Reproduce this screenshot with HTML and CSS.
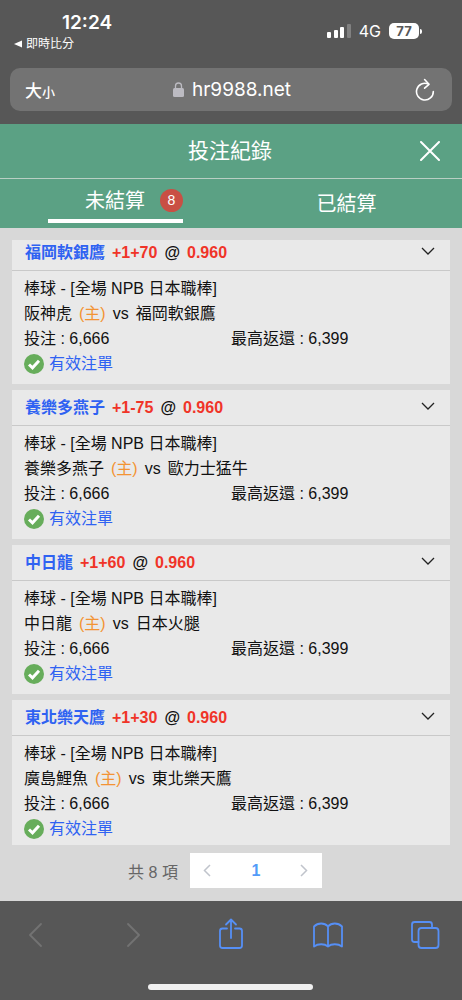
FILE: index.html
```
<!DOCTYPE html>
<html lang="zh-Hant">
<head>
  <meta charset="UTF-8">
  <meta name="viewport" content="width=device-width, initial-scale=1">
  <title>投注紀錄</title>
  <link rel="stylesheet" href="styles.css">
</head>
<body>
  <div class="browser-top">
    <div class="status-bar">
      <div class="status-left">
        <div class="clock">12:24</div>
        <a class="back-app" href="#"><svg width="8" height="8" viewBox="0 0 8 8"><path d="M0 4L8 0.5V7.5Z" fill="#fff"/></svg>即時比分</a>
      </div>
      <div class="status-right">
        <svg width="24" height="16" viewBox="0 0 24 16" fill="#fff">
          <rect x="0" y="9" width="4" height="6" rx="1"/>
          <rect x="7" y="7" width="4" height="8" rx="1"/>
          <rect x="13" y="4" width="4" height="11" rx="1"/>
          <rect x="20" y="1" width="4" height="14" rx="1" opacity="0.25"/>
        </svg>
        <span class="network">4G</span>
        <span class="battery">77</span>
      </div>
    </div>
    <div class="address-bar">
      <button class="text-size" type="button">大<small>小</small></button>
      <div class="url">
        <svg width="11" height="15" viewBox="0 0 11 15"><rect x="0" y="6" width="11" height="9" rx="1.5" fill="#bcbbc2"/><path d="M2.5 7V4a3 3 0 0 1 6 0V7" fill="none" stroke="#bcbbc2" stroke-width="1.3"/></svg>
        <span>hr9988.net</span>
      </div>
      <button class="reload" type="button" aria-label="重新載入">
        <svg width="20" height="24" viewBox="0 0 20 24" fill="none" stroke="#fff" stroke-width="1.6" stroke-linecap="round" stroke-linejoin="round"><path d="M18.3 13.6A8.4 8.4 0 1 1 13.4 6"/><path d="M9.6 1.5L14 6.3L9.6 10.2"/></svg>
      </button>
    </div>
  </div>

  <header class="page-header">
    <h1>投注紀錄</h1>
    <button class="close" type="button" aria-label="關閉">
      <svg width="20" height="20" viewBox="0 0 20 20" stroke="#fff" stroke-width="2" stroke-linecap="round"><path d="M1 1L19 19M19 1L1 19"/></svg>
    </button>
  </header>

  <nav class="tabs">
    <div class="tab">
      <button class="tab-button active" type="button">未結算<span class="badge">8</span></button>
    </div>
    <div class="tab">
      <button class="tab-button" type="button">已結算</button>
    </div>
  </nav>

  <main class="content">
    <div class="bet-list">
      <article class="bet">
        <div class="bet-header">
          <h2><span class="team">福岡軟銀鷹</span> <span class="odds">+1+70</span> <span>@</span> <span class="odds">0.960</span></h2>
          <button class="toggle" type="button" aria-label="收合"><svg width="14" height="8" viewBox="0 0 14 8"><path d="M1 1L7 7L13 1"/></svg></button>
        </div>
        <div class="bet-body">
          <p>棒球 - [全場 NPB 日本職棒]</p>
          <p class="match"><span>阪神虎</span> <span class="home">(主)</span> <span>vs</span> <span>福岡軟銀鷹</span></p>
          <p class="amounts"><span>投注 : 6,666</span><span>最高返還 : 6,399</span></p>
          <p class="valid"><svg width="20" height="20" viewBox="0 0 20 20"><circle cx="10" cy="10" r="10"/><path d="M5 10.5L8.5 13.8L15 6.8"/></svg>有效注單</p>
        </div>
      </article>
      <article class="bet">
        <div class="bet-header">
          <h2><span class="team">養樂多燕子</span> <span class="odds">+1-75</span> <span>@</span> <span class="odds">0.960</span></h2>
          <button class="toggle" type="button" aria-label="收合"><svg width="14" height="8" viewBox="0 0 14 8"><path d="M1 1L7 7L13 1"/></svg></button>
        </div>
        <div class="bet-body">
          <p>棒球 - [全場 NPB 日本職棒]</p>
          <p class="match"><span>養樂多燕子</span> <span class="home">(主)</span> <span>vs</span> <span>歐力士猛牛</span></p>
          <p class="amounts"><span>投注 : 6,666</span><span>最高返還 : 6,399</span></p>
          <p class="valid"><svg width="20" height="20" viewBox="0 0 20 20"><circle cx="10" cy="10" r="10"/><path d="M5 10.5L8.5 13.8L15 6.8"/></svg>有效注單</p>
        </div>
      </article>
      <article class="bet">
        <div class="bet-header">
          <h2><span class="team">中日龍</span> <span class="odds">+1+60</span> <span>@</span> <span class="odds">0.960</span></h2>
          <button class="toggle" type="button" aria-label="收合"><svg width="14" height="8" viewBox="0 0 14 8"><path d="M1 1L7 7L13 1"/></svg></button>
        </div>
        <div class="bet-body">
          <p>棒球 - [全場 NPB 日本職棒]</p>
          <p class="match"><span>中日龍</span> <span class="home">(主)</span> <span>vs</span> <span>日本火腿</span></p>
          <p class="amounts"><span>投注 : 6,666</span><span>最高返還 : 6,399</span></p>
          <p class="valid"><svg width="20" height="20" viewBox="0 0 20 20"><circle cx="10" cy="10" r="10"/><path d="M5 10.5L8.5 13.8L15 6.8"/></svg>有效注單</p>
        </div>
      </article>
      <article class="bet">
        <div class="bet-header">
          <h2><span class="team">東北樂天鷹</span> <span class="odds">+1+30</span> <span>@</span> <span class="odds">0.960</span></h2>
          <button class="toggle" type="button" aria-label="收合"><svg width="14" height="8" viewBox="0 0 14 8"><path d="M1 1L7 7L13 1"/></svg></button>
        </div>
        <div class="bet-body">
          <p>棒球 - [全場 NPB 日本職棒]</p>
          <p class="match"><span>廣島鯉魚</span> <span class="home">(主)</span> <span>vs</span> <span>東北樂天鷹</span></p>
          <p class="amounts"><span>投注 : 6,666</span><span>最高返還 : 6,399</span></p>
          <p class="valid"><svg width="20" height="20" viewBox="0 0 20 20"><circle cx="10" cy="10" r="10"/><path d="M5 10.5L8.5 13.8L15 6.8"/></svg>有效注單</p>
        </div>
      </article>
    </div>

    <div class="pagination">
      <span class="total">共 8 項</span>
      <div class="pager">
        <button type="button" aria-label="上一頁"><svg width="8" height="13" viewBox="0 0 8 13"><path d="M7 1L1.500 6.500L7 12"/></svg></button>
        <button class="current" type="button">1</button>
        <button type="button" aria-label="下一頁"><svg width="8" height="13" viewBox="0 0 8 13"><path d="M1 1L6.500 6.500L1 12"/></svg></button>
      </div>
    </div>
  </main>

  <footer class="toolbar">
    <div class="toolbar-buttons">
      <button class="disabled" type="button" aria-label="返回"><svg width="30" height="32" viewBox="0 0 30 32"><path d="M20 6L9 17L20 28"/></svg></button>
      <button class="disabled" type="button" aria-label="前進"><svg width="30" height="32" viewBox="0 0 30 32"><path d="M10 6L21 17L10 28"/></svg></button>
      <button type="button" aria-label="分享"><svg width="30" height="32" viewBox="0 0 30 32"><path d="M11 10.500H6.500Q4 10.500 4 13V27.500Q4 30 6.500 30H23.500Q26 30 26 27.500V13Q26 10.500 23.500 10.500H19M15 20V1.500M10 6.500L15 1.500L20 6.500"/></svg></button>
      <button type="button" aria-label="書籤"><svg width="30" height="32" viewBox="0 0 30 32"><path d="M15 8.500C11.500 4.500 5 4.500 1 8.500V28.500C5 25.500 11.500 25.500 15 28.500C18.500 25.500 25 25.500 29 28.500V8.500C25 4.500 18.500 4.500 15 8.500V28.500"/></svg></button>
      <button type="button" aria-label="分頁"><svg width="30" height="32" viewBox="0 0 30 32"><rect x="8.500" y="10" width="20" height="20" rx="3"/><path d="M8.500 24H4.500Q2 24 2 21.500V6.500Q2 4 4.500 4H19.500Q22 4 22 6.500V10"/></svg></button>
    </div>
    <div class="home-indicator"></div>
  </footer>
</body>
</html>
```
FILE: styles.css
```
* {
  box-sizing: border-box;
}
body {
  display: flex;
  flex-direction: column;
  height: 100vh;
  margin: 0;
  font-family: "Liberation Sans", "Noto Sans CJK TC", sans-serif;
  font-size: 16px;
  color: #111;
  background-color: #d8d8d8;
}
h1, h2, p {
  margin: 0;
}
button {
  padding: 0;
  border: none;
  background: none;
  color: inherit;
  font: inherit;
  cursor: pointer;
}
svg {
  display: block;
  flex: none;
}

/* browser chrome */
.browser-top {
  flex: none;
  padding: 0 10px 13px;
  background-color: #575757;
  color: #fff;
  font-family: Inter, "Noto Sans CJK TC", sans-serif;
}
.status-bar {
  display: flex;
  justify-content: space-between;
  height: 68px;
}
.status-left {
  padding: 12px 0 0 4px;
}
.clock {
  padding-left: 48px;
  font-size: 19px;
  font-weight: 600;
  line-height: 22px;
}
.back-app {
  display: flex;
  align-items: center;
  gap: 4px;
  color: #fff;
  font-size: 12px;
  line-height: 20px;
  text-decoration: none;
}
.status-right {
  display: flex;
  align-items: center;
  gap: 8px;
  height: 20px;
  margin: 21px 33px 0 0;
}
.network {
  font-size: 16px;
}
.battery {
  position: relative;
  width: 30px;
  border-radius: 5px;
  background-color: #fff;
  color: #575757;
  font-size: 13px;
  font-weight: 700;
  line-height: 16px;
  text-align: center;
}
.battery::after {
  content: "";
  position: absolute;
  top: 6px;
  right: -3px;
  width: 2px;
  height: 5px;
  border-radius: 0 2px 2px 0;
  background-color: #fff;
}
.address-bar {
  display: flex;
  align-items: center;
  justify-content: space-between;
  height: 43px;
  padding: 0 17px 0 15px;
  border-radius: 10px;
  background-color: #737373;
}
.text-size {
  width: 36px;
  font-size: 17px;
  font-weight: 500;
  text-align: left;
  white-space: nowrap;
}
.text-size small {
  font-size: 13px;
}
.url {
  display: flex;
  align-items: center;
  gap: 8px;
  font-size: 19px;
}
.reload {
  display: flex;
  justify-content: flex-end;
  width: 32px;
}

/* title and tabs */
.page-header {
  display: flex;
  flex: none;
  align-items: center;
  height: 55px;
  padding: 0 22px;
  border-bottom: 1px solid #b9cfc4;
  background-color: #5ba184;
  color: #fff;
}
.page-header h1 {
  flex: 1;
  padding: 0 0 4px 18px;
  font-size: 21px;
  font-weight: 400;
  text-align: center;
}
.tabs {
  display: flex;
  flex: none;
  height: 49px;
  background-color: #5ba184;
  color: #fff;
}
.tab {
  display: flex;
  flex: 1;
  align-items: center;
  justify-content: center;
}
.tab-button {
  display: flex;
  align-items: center;
  justify-content: flex-end;
  gap: 15px;
  font-size: 20px;
  line-height: 30px;
}
.tab-button.active {
  width: 135px;
  height: 38px;
  padding-bottom: 2px;
  border-bottom: 4px solid #fff;
}
.badge {
  width: 23px;
  border-radius: 50%;
  background-color: #c94f44;
  font-size: 14px;
  line-height: 23px;
  text-align: center;
}

/* bets */
.content {
  display: flex;
  flex: 1;
  flex-direction: column;
  min-height: 0;
  padding: 12px 12px 0;
}
.bet-list {
  flex: 1;
  min-height: 0;
  margin-bottom: 8px;
  overflow: hidden;
}
.bet {
  margin-bottom: 6px;
  background-color: #e9e9e9;
}
.bet:first-child {
  margin-top: -5px;
}
.bet-header {
  display: flex;
  align-items: center;
  justify-content: space-between;
  height: 36px;
  padding: 0 15px 0 13px;
  border-bottom: 1px solid #c9c9c9;
}
.bet-header h2 {
  display: flex;
  gap: 7px;
  font-size: 16px;
  line-height: 24px;
}
.team {
  color: #2f62f2;
}
.odds {
  color: #f03428;
}
.toggle {
  padding-bottom: 4px;
}
.toggle path {
  fill: none;
  stroke: #222;
  stroke-width: 1.3;
}
.bet-body {
  padding: 5px 12px 8px;
  line-height: 25px;
}
.match {
  display: flex;
  gap: 7px;
}
.home {
  color: #f39333;
}
.amounts {
  display: grid;
  grid-template-columns: 1fr 1fr;
}
.valid {
  display: flex;
  align-items: center;
  gap: 5px;
  color: #2f62f2;
}
.valid circle {
  fill: #67ad5b;
}
.valid path {
  fill: none;
  stroke: #fff;
  stroke-width: 3;
}

/* pagination */
.pagination {
  display: flex;
  flex: none;
  align-items: center;
  justify-content: center;
  gap: 12px;
  padding: 0 12px 13px 0;
}
.total {
  color: #666;
}
.pager {
  display: flex;
  height: 35px;
  background-color: #fff;
}
.pager button {
  display: flex;
  align-items: center;
  justify-content: center;
  width: 35px;
}
.pager .current {
  width: 62px;
  color: #529bf8;
  font-weight: 700;
}
.pager path {
  fill: none;
  stroke: #c0c4cc;
  stroke-width: 1.5;
}

/* bottom toolbar */
.toolbar {
  display: flex;
  flex: none;
  flex-direction: column;
  align-items: center;
  justify-content: space-between;
  height: 99px;
  padding: 17px 22px 10px 21px;
  background-color: #575757;
}
.toolbar-buttons {
  display: flex;
  justify-content: space-between;
  width: 100%;
}
.toolbar-buttons path,
.toolbar-buttons rect {
  fill: none;
  stroke: #568ff5;
  stroke-width: 1.8;
  stroke-linecap: round;
  stroke-linejoin: round;
}
.toolbar-buttons .disabled path {
  stroke: #737373;
}
.home-indicator {
  width: 165px;
  height: 6px;
  border-radius: 3px;
  background-color: #f0f0f0;
}
```
